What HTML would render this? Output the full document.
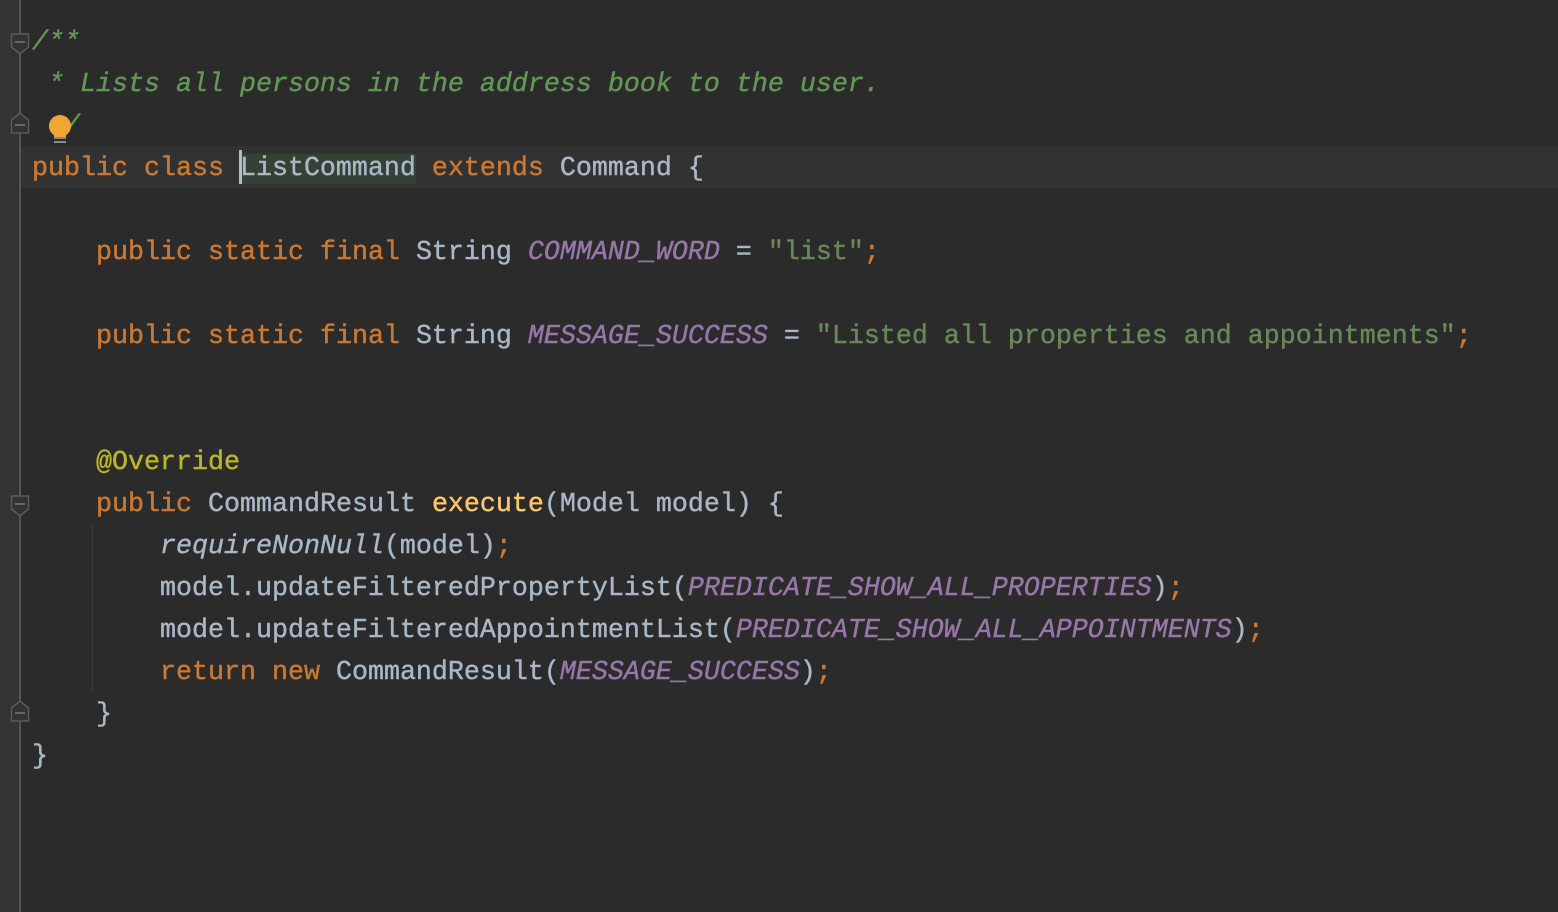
<!DOCTYPE html>
<html><head><meta charset="utf-8"><style>
html,body{margin:0;padding:0;}
body{width:1558px;height:912px;background:#2b2b2b;position:relative;overflow:hidden;font-family:"Liberation Mono","DejaVu Sans Mono",monospace;font-size:26.67px;}
.gutter{position:absolute;left:0;top:0;width:20px;height:912px;background:#313335;}
.gline{position:absolute;left:19px;top:0;width:2px;height:912px;background:#555555;}
.cur{position:absolute;left:21px;top:146px;width:1537px;height:42px;background:#323232;}
.code{position:absolute;left:32px;top:22px;white-space:pre;line-height:42px;color:#a9b7c6;-webkit-text-stroke:0.4px currentColor;}
.k{color:#cc7832}.c{color:#629755;font-style:italic}.s{color:#6a8759}.p{color:#9876aa;font-style:italic}
.a{color:#bbb529}.m{color:#ffc66d}.i{font-style:italic}
.hl{background:#344134}
.guide{position:absolute;left:92px;top:524px;width:1px;height:168px;background:#3b3b3b;}
.caret{position:absolute;left:239px;top:150px;width:3px;height:34px;background:#bbbbbb;}
</style></head><body>
<div class="gutter"></div><div class="gline"></div>
<div class="cur"></div>
<div class="guide"></div>
<div class="code"><span class="c">/**</span>
<span class="c"> * Lists all persons in the address book to the user.</span>
<span class="c">  /</span>
<span class="k">public class </span><span class="hl">ListCommand</span> <span class="k">extends </span>Command {

    <span class="k">public static final </span>String <span class="p">COMMAND_WORD</span> = <span class="s">"list"</span><span class="k">;</span>

    <span class="k">public static final </span>String <span class="p">MESSAGE_SUCCESS</span> = <span class="s">"Listed all properties and appointments"</span><span class="k">;</span>


    <span class="a">@Override</span>
    <span class="k">public </span>CommandResult <span class="m">execute</span>(Model model) {
        <span class="i">requireNonNull</span>(model)<span class="k">;</span>
        model.updateFilteredPropertyList(<span class="p">PREDICATE_SHOW_ALL_PROPERTIES</span>)<span class="k">;</span>
        model.updateFilteredAppointmentList(<span class="p">PREDICATE_SHOW_ALL_APPOINTMENTS</span>)<span class="k">;</span>
        <span class="k">return new </span>CommandResult(<span class="p">MESSAGE_SUCCESS</span>)<span class="k">;</span>
    }
}</div>
<div class="caret"></div>
<svg width="1558" height="912" style="position:absolute;left:0;top:0" xmlns="http://www.w3.org/2000/svg">
<g fill="#313335" stroke="#5a5a5a" stroke-width="1.5">
<path d="M11.5 34 h17 v13 l-8.5 7 l-8.5 -7 z"/>
<path d="M11.5 133 h17 v-13 l-8.5 -7 l-8.5 7 z"/>
<path d="M11.5 496 h17 v13 l-8.5 7 l-8.5 -7 z"/>
<path d="M11.5 721 h17 v-13 l-8.5 -7 l-8.5 7 z"/>
</g>
<g stroke="#777" stroke-width="1.5">
<line x1="15" y1="42" x2="25" y2="42"/><line x1="15" y1="125" x2="25" y2="125"/>
<line x1="15" y1="504" x2="25" y2="504"/><line x1="15" y1="713" x2="25" y2="713"/>
</g>
<circle cx="60" cy="126" r="11" fill="#f0a732"/>
<rect x="54" y="133" width="12" height="4" fill="#f0a732"/>
<g stroke="#aaa" stroke-width="1.5"><line x1="54" y1="138" x2="66" y2="138"/><line x1="54" y1="142" x2="66" y2="142"/></g>
</svg>
</body></html>
